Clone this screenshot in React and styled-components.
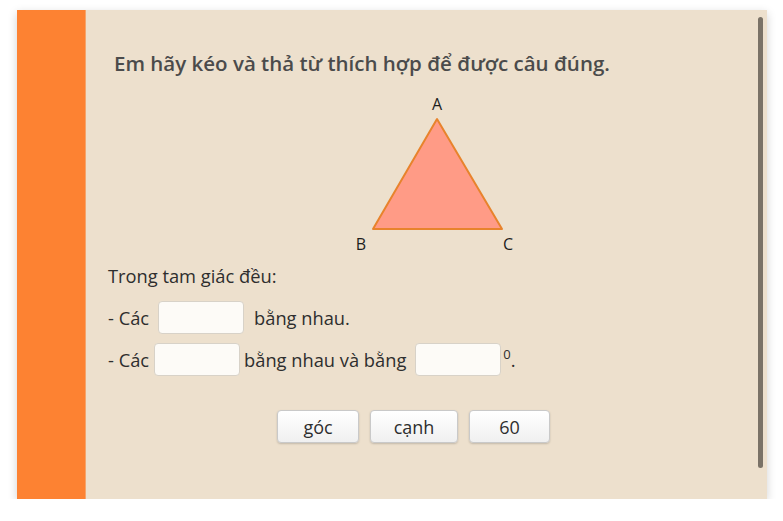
import styled, { createGlobalStyle } from "styled-components";

const GlobalStyle = createGlobalStyle`
  body {
    margin: 0;
    background: #ffffff;
    font-family: "Open Sans", "Noto Sans", sans-serif;
  }
`;

const words = [
  { id: 1, text: "góc", width: 82 },
  { id: 2, text: "cạnh", width: 88 },
  { id: 3, text: "60", width: 81 },
];

const App = () => {
  return (
    <>
      <GlobalStyle />
      <Card>
        <SideBar />
        <Content>
          <Title>Em hãy kéo và thả từ thích hợp để được câu đúng.</Title>
          <Figure width="170" height="164" viewBox="0 -4 170 164">
            <polygon
              points="85,24 21,134 150,134"
              fill="#ff9b86"
              stroke="#e8832c"
              strokeWidth="2"
              strokeLinejoin="round"
            />
            <Label x="85" y="15">A</Label>
            <Label x="9" y="155">B</Label>
            <Label x="156" y="155">C</Label>
          </Figure>
          <Row>Trong tam giác đều:</Row>
          <Row>
            - Các
            <DropBox $ml={9} $mr={10} />
            bằng nhau.
          </Row>
          <Row>
            - Các
            <DropBox $ml={5} $mr={4} />
            bằng nhau và bằng
            <DropBox $ml={9} $mr={2} />
            <Sup>0</Sup>.
          </Row>
          <Choices>
            {words.map(w => (
              <Choice key={w.id} $w={w.width}>
                {w.text}
              </Choice>
            ))}
          </Choices>
          <ScrollThumb />
        </Content>
      </Card>
    </>
  );
};

export default App;

const Card = styled.div`
  margin: 10px 0 0 17px;
  width: 750px;
  height: 489px;
  display: flex;
  box-shadow: 0 3px 9px rgba(0, 0, 0, 0.18);
`;

const SideBar = styled.div`
  width: 69px;
  background-color: #fd8232;
  border-right: 1px solid #f5a56c;
  box-sizing: border-box;
`;

const Content = styled.div`
  position: relative;
  flex: 1;
  background-color: #ede0cd;
  padding: 39px 48px 0 22px;
  display: flex;
  flex-direction: column;
`;

const Title = styled.h1`
  margin: 0 0 14px 6px;
  font-size: 20.5px;
  font-weight: 600;
  color: #4b4b4b;
  line-height: 28px;
`;

const Figure = styled.svg`
  display: block;
  margin-left: 244px;
  overflow: visible;
`;

const Label = styled.text`
  font-family: "Open Sans", "Noto Sans", sans-serif;
  font-size: 16px;
  font-weight: 500;
  fill: #1e1e1e;
  text-anchor: middle;
`;

const Row = styled.div`
  display: flex;
  align-items: center;
  height: 32px;
  margin-top: 10px;
  font-size: 18.3px;
  color: #2e2e2e;
  white-space: pre;

  &:nth-of-type(1) {
    margin-top: 4px;
  }
`;

const DropBox = styled.span`
  display: inline-block;
  box-sizing: border-box;
  width: 86px;
  height: 33px;
  margin-left: ${props => props.$ml}px;
  margin-right: ${props => props.$mr}px;
  background-color: #fdfbf7;
  border: 1px solid #d8d2c8;
  border-radius: 4px;
`;

const Sup = styled.span`
  font-size: 13px;
  align-self: flex-start;
  margin-top: 2px;
`;

const Choices = styled.div`
  display: flex;
  justify-content: center;
  gap: 11px;
  margin-top: 35px;
`;

const Choice = styled.button`
  box-sizing: border-box;
  width: ${props => props.$w}px;
  height: 33px;
  padding: 0;
  font-family: "Open Sans", "Noto Sans", sans-serif;
  font-size: 18px;
  color: #2e2e2e;
  background: linear-gradient(#ffffff, #f0f0f0);
  border: 1px solid #c9c9c9;
  border-radius: 4px;
  box-shadow: 0 1px 2px rgba(0, 0, 0, 0.18);
  cursor: pointer;
`;

const ScrollThumb = styled.div`
  position: absolute;
  top: 7px;
  bottom: 31px;
  right: 4px;
  width: 5px;
  background-color: #7a7267;
  border-radius: 3px;
`;
